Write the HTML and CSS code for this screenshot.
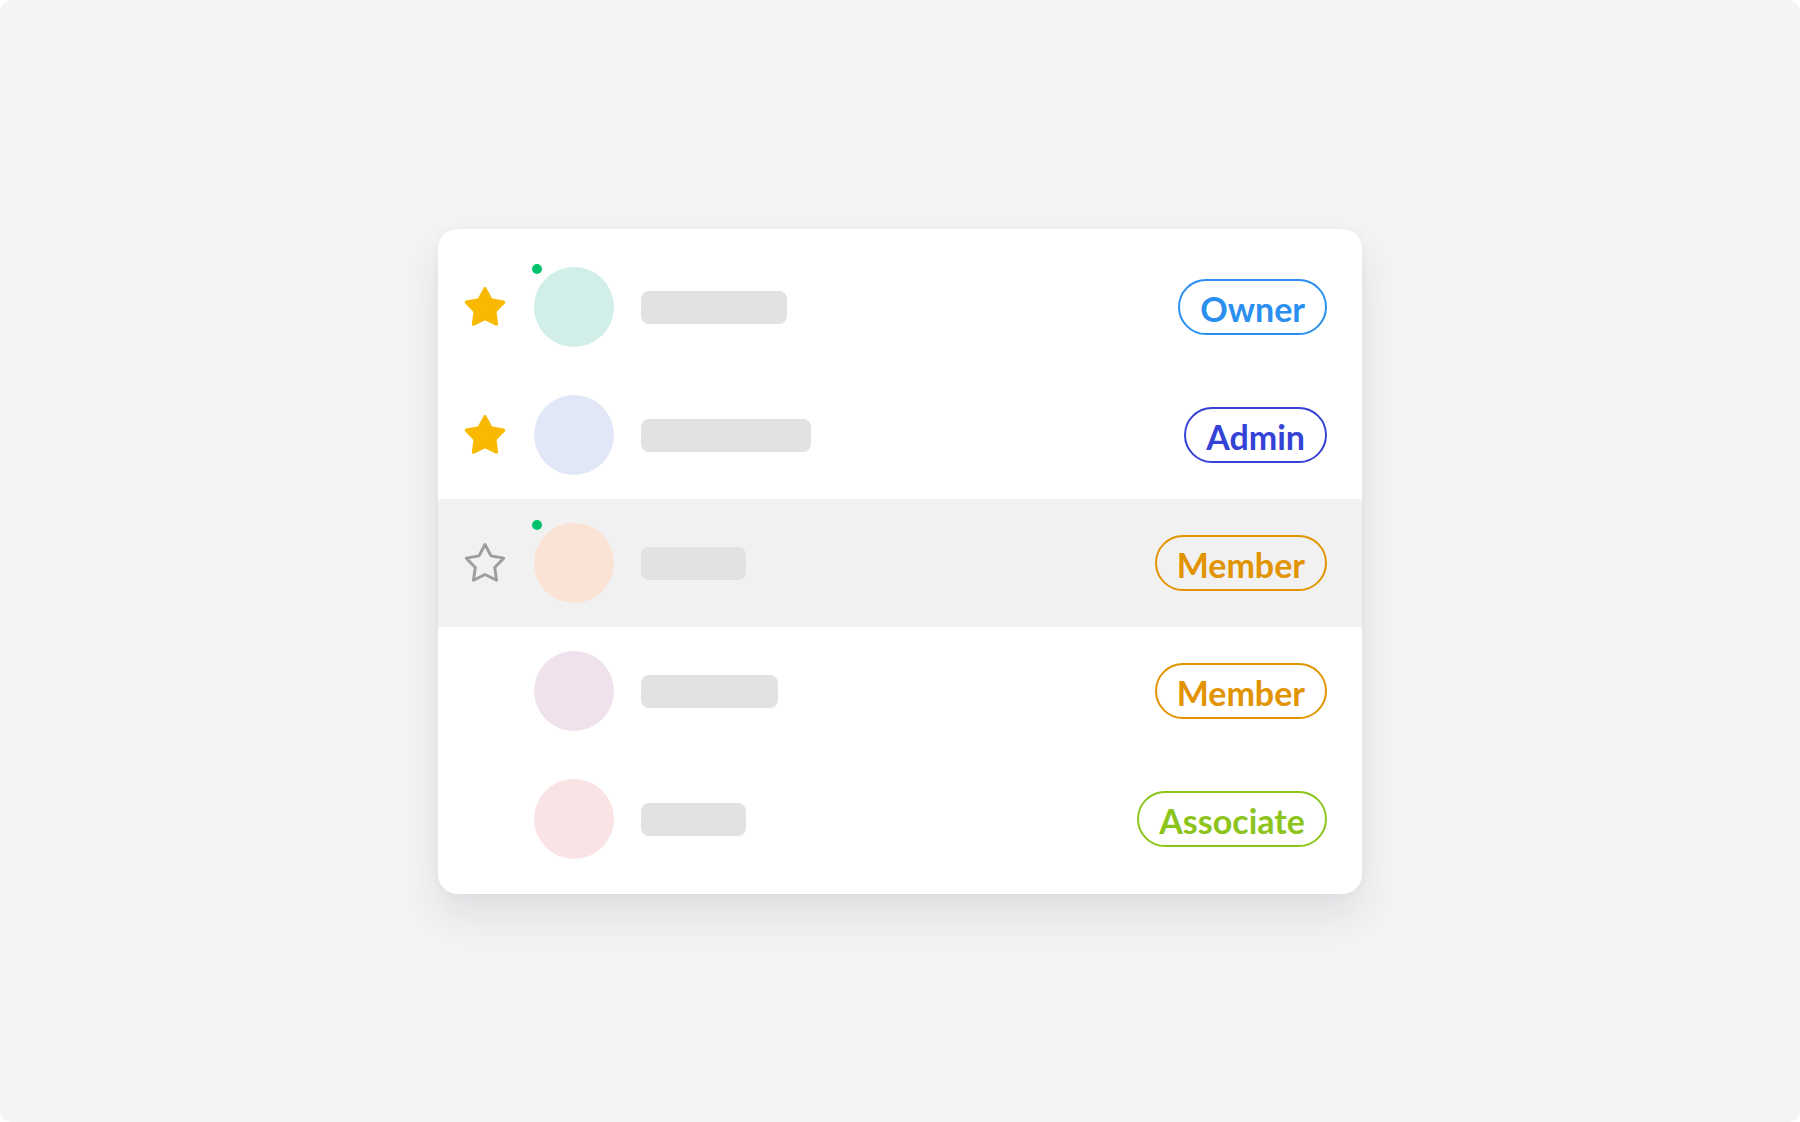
FILE: index.html
```html
<!DOCTYPE html>
<html>
<head>
<meta charset="utf-8">
<link rel="stylesheet" href="styles.css">
</head>
<body>
<div class="canvas">
  <div class="card">
    <div class="row">
      <div class="star-slot"><svg class="star" viewBox="2 2 20 20"><polygon class="star-fill" points="12,3.3 14.88,8.64 20.84,9.73 16.66,14.11 17.47,20.12 12,17.5 6.53,20.12 7.34,14.11 3.16,9.73 9.12,8.64"/></svg></div>
      <div class="avatar av-mint"><span class="online"></span></div>
      <div class="bar" style="width:146px"></div>
      <div class="spacer"></div>
      <span class="badge owner">Owner</span>
    </div>
    <div class="row">
      <div class="star-slot"><svg class="star" viewBox="2 2 20 20"><polygon class="star-fill" points="12,3.3 14.88,8.64 20.84,9.73 16.66,14.11 17.47,20.12 12,17.5 6.53,20.12 7.34,14.11 3.16,9.73 9.12,8.64"/></svg></div>
      <div class="avatar av-blue"></div>
      <div class="bar" style="width:170px"></div>
      <div class="spacer"></div>
      <span class="badge admin">Admin</span>
    </div>
    <div class="row active">
      <div class="star-slot"><svg class="star" viewBox="2 2 20 20"><polygon class="star-line" points="12,3.2 14.85,8.6 20.9,9.7 16.6,14.1 17.5,20.2 12,17.5 6.5,20.2 7.4,14.1 3.1,9.7 9.15,8.6"/></svg></div>
      <div class="avatar av-peach"><span class="online"></span></div>
      <div class="bar" style="width:105px"></div>
      <div class="spacer"></div>
      <span class="badge member">Member</span>
    </div>
    <div class="row">
      <div class="star-slot"></div>
      <div class="avatar av-lilac"></div>
      <div class="bar" style="width:137px"></div>
      <div class="spacer"></div>
      <span class="badge member">Member</span>
    </div>
    <div class="row">
      <div class="star-slot"></div>
      <div class="avatar av-pink"></div>
      <div class="bar" style="width:105px"></div>
      <div class="spacer"></div>
      <span class="badge associate">Associate</span>
    </div>
  </div>
</div>
</body>
</html>
```

FILE: styles.css
```css
html, body {
  margin: 0;
  padding: 0;
  background: #ffffff;
}

.canvas {
  width: 1800px;
  height: 1122px;
  background: #f4f4f4;
  border-radius: 12px;
  display: flex;
  align-items: center;
  justify-content: center;
  font-family: Lato, "Liberation Sans", sans-serif;
}

.card {
  width: 924px;
  box-sizing: border-box;
  padding: 14px 0 11px;
  background: #ffffff;
  border-radius: 20px;
  box-shadow: 0 22px 44px rgba(40, 40, 70, 0.10), 0 2px 10px rgba(40, 40, 70, 0.04);
  margin-top: 1px;
}

.row {
  height: 128px;
  display: flex;
  align-items: center;
  padding: 0 35px 0 27px;
}

.row.active {
  background: #f1f1f1;
}

.star-slot {
  width: 40px;
  height: 40px;
  margin-right: 29px;
  flex: none;
  display: flex;
  align-items: center;
  justify-content: center;
}

.star {
  width: 42px;
  height: 42px;
  flex: none;
  display: block;
}

.star-fill {
  fill: #f8b900;
  stroke: #f8b900;
  stroke-width: 1.6;
  stroke-linejoin: round;
}

.star-line {
  fill: none;
  stroke: #9d9d9d;
  stroke-width: 1.4;
  stroke-linejoin: round;
}

.avatar {
  width: 80px;
  height: 80px;
  border-radius: 50%;
  flex: none;
  position: relative;
  margin-right: 27px;
}

.av-mint { background: #d1efe8; }
.av-blue { background: #e1e7f7; }
.av-peach { background: #fae3d4; }
.av-lilac { background: #efe2ec; }
.av-pink { background: #f9e3e5; }

.online {
  position: absolute;
  left: -2px;
  top: -3px;
  width: 10px;
  height: 10px;
  border-radius: 50%;
  background: #00c26d;
}

.bar {
  height: 33px;
  border-radius: 8px;
  background: #e3e1e2;
  flex: none;
}

.spacer {
  flex: 1;
}

.badge {
  box-sizing: border-box;
  height: 56px;
  padding: 3px 20px 0;
  border: 2px solid currentColor;
  border-radius: 28px;
  display: inline-flex;
  align-items: center;
  justify-content: center;
  font-size: 34px;
  font-weight: 700;
  line-height: 1;
}

.owner { color: #2a8fef; }
.admin { color: #3443d5; }
.member { color: #e29400; }
.associate { color: #8cc41c; }
```
